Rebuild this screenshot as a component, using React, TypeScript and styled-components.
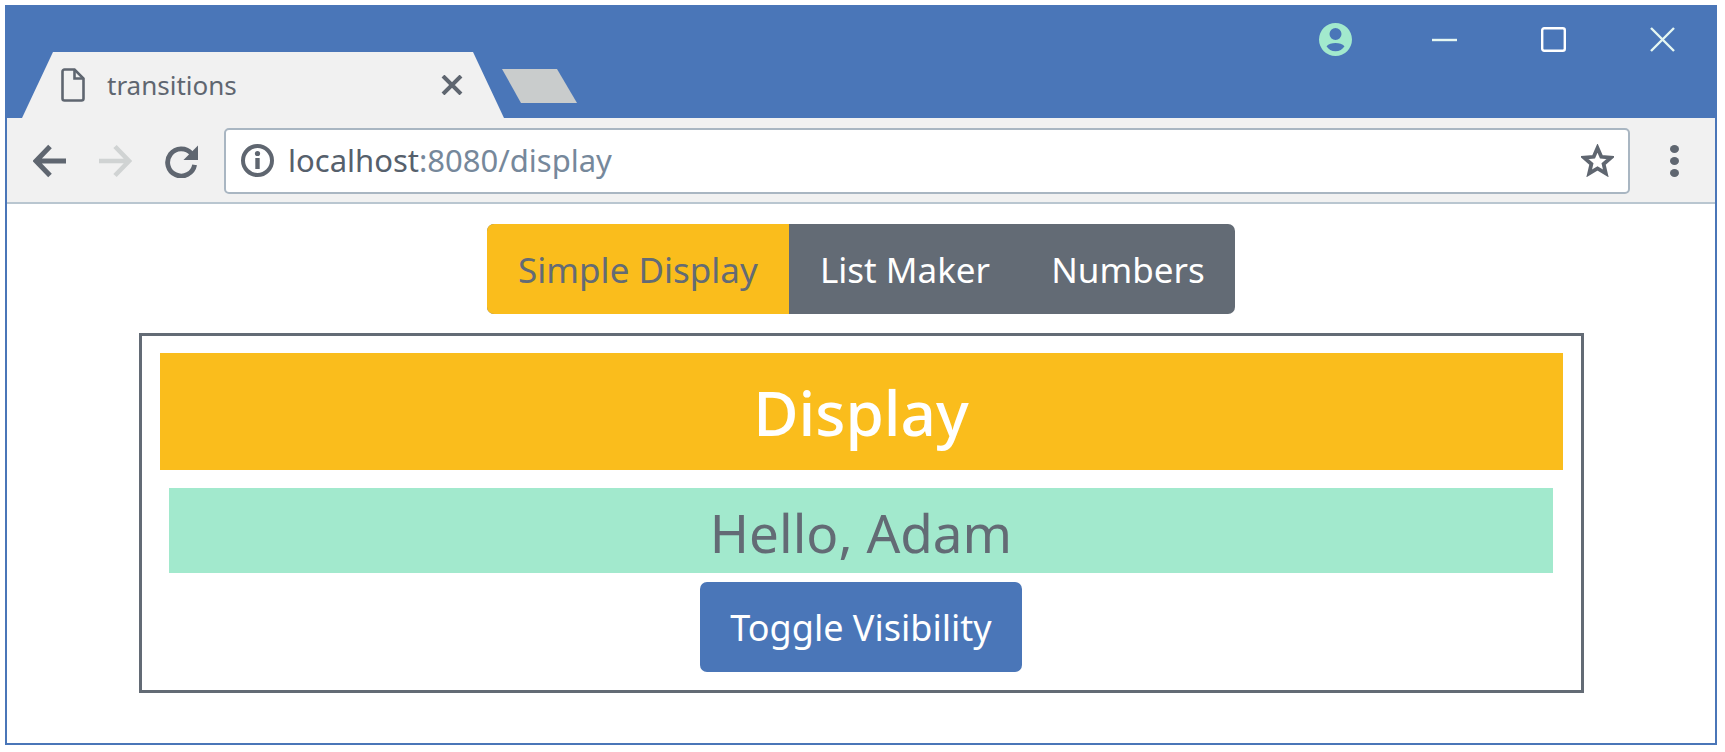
import React from 'react'
import styled, { createGlobalStyle } from 'styled-components'

const GlobalStyle = createGlobalStyle`
  html, body {
    margin: 0;
    padding: 0;
    background: #fff;
  }
  body {
    font-family: 'Noto Sans', 'Open Sans', sans-serif;
  }
`

const Page = styled.div`
  width: 1725px;
  height: 752px;
  padding: 5px 8px 7px 5px;
  box-sizing: border-box;
  overflow: hidden;
`

const Window = styled.div`
  height: 100%;
  box-sizing: border-box;
  border: 2px solid #4a76b8;
  border-top: none;
  display: flex;
  flex-direction: column;
`

const TitleBar = styled.div`
  height: 113px;
  flex: none;
  background: #4a76b8;
  display: flex;
  align-items: flex-end;
  padding-left: 15px;
`

const Tab = styled.div`
  width: 482px;
  height: 66px;
  box-sizing: border-box;
  background: #f1f1f1;
  clip-path: polygon(0 100%, 31px 0, 451px 0, 100% 100%);
  display: flex;
  align-items: center;
  padding: 0 41px 0 39px;
  color: #5f6670;
`

const TabTitle = styled.span`
  font-size: 26px;
  line-height: 32px;
  margin-left: 22px;
  flex: 1;
`

const NewTab = styled.div`
  width: 75px;
  height: 34px;
  margin: 0 0 15px -2px;
  background: #c9cccc;
  clip-path: polygon(0 0, 55px 0, 100% 100%, 19px 100%);
`

const WindowControls = styled.div`
  margin-left: auto;
  align-self: flex-start;
  display: flex;
  align-items: center;
  gap: 80px;
  padding: 18px 40px 0 0;
`

const ControlGroup = styled.div`
  display: flex;
  gap: 84px;
`

const ProfileSlot = styled.div`
  width: 33px;
  height: 33px;
`

const ControlSlot = styled.div`
  width: 25px;
  height: 25px;
`

const Toolbar = styled.div`
  height: 86px;
  flex: none;
  box-sizing: border-box;
  background: #f1f1f1;
  border-bottom: 2px solid #b9c6d0;
  display: flex;
  align-items: center;
  padding: 1px 26px 0 26px;
`

const NavButton = styled.div`
  width: 33px;
  height: 34px;
  margin-right: 33px;
  flex: none;
`

const AddressBar = styled.div`
  flex: none;
  width: 1406px;
  height: 66px;
  margin-left: -7px;
  box-sizing: border-box;
  background: #fff;
  border: 2px solid #a9b6c2;
  border-radius: 5px;
  display: flex;
  align-items: center;
  padding: 0 14px 0 15px;
`

const InfoSlot = styled.div`
  width: 33px;
  height: 33px;
  flex: none;
`

const Url = styled.div`
  margin-left: 14px;
  padding-bottom: 2px;
  flex: 1;
  font-size: 31px;
  color: #56606c;
`

const UrlRest = styled.span`
  color: #76889b;
`

const StarSlot = styled.div`
  width: 33px;
  height: 33px;
  flex: none;
`

const MenuDots = styled.div`
  margin-left: 40px;
  display: flex;
  flex-direction: column;
  gap: 4px;
`

const Dot = styled.span`
  width: 9px;
  height: 8px;
  border-radius: 50%;
  background: #5f6670;
`

const Content = styled.div`
  flex: 1;
  display: flex;
  flex-direction: column;
  align-items: center;
  padding-top: 20px;
`

const NavGroup = styled.div`
  width: 748px;
  height: 90px;
  display: flex;
  border-radius: 7px;
  overflow: hidden;
  background: #636b75;
`

const NavItem = styled.div<{ $active?: boolean; $width: number }>`
  width: ${({ $width }) => $width}px;
  flex: none;
  display: flex;
  align-items: center;
  justify-content: center;
  font-size: 35px;
  color: ${({ $active }) => ($active ? '#636b75' : '#fff')};
  background: ${({ $active }) => ($active ? '#fabd1c' : 'transparent')};
`

const Box = styled.div`
  width: 1445px;
  height: 360px;
  margin-top: 19px;
  box-sizing: border-box;
  border: 3px solid #636b75;
  padding: 17px 18px;
  display: flex;
  flex-direction: column;
  align-items: center;
`

const Heading = styled.div`
  width: 100%;
  height: 117px;
  flex: none;
  background: #fabd1c;
  color: #fff;
  font-size: 62px;
  font-weight: 500;
  display: flex;
  align-items: center;
  justify-content: center;
`

const Message = styled.div`
  width: 1384px;
  height: 85px;
  flex: none;
  box-sizing: border-box;
  padding-top: 4px;
  margin-top: 18px;
  background: #a2e9cd;
  color: #636b75;
  font-size: 53px;
  display: flex;
  align-items: center;
  justify-content: center;
`

const ToggleButton = styled.button`
  width: 322px;
  height: 90px;
  flex: none;
  margin-top: 9px;
  border: none;
  border-radius: 7px;
  background: #4a76b8;
  color: #fff;
  font-family: inherit;
  font-size: 36px;
  padding: 0;
`

const Icon = styled.svg`
  display: block;
  width: 100%;
  height: 100%;
`

const FileGlyph = styled.svg`
  width: 24px;
  height: 34px;
  flex: none;
`

const CloseGlyph = styled.svg`
  width: 22px;
  height: 20px;
  flex: none;
`

export default function App() {
  return (
    <>
      <GlobalStyle />
      <Page>
        <Window>
          <TitleBar>
            <Tab>
              <FileGlyph viewBox="0 0 24 34" fill="none" stroke="#5f6670" strokeWidth="2.6">
                <path d="M1.5 3.5a2 2 0 0 1 2-2h10l9 9v20a2 2 0 0 1-2 2h-17a2 2 0 0 1-2-2z" />
                <path d="M13.5 1.5v9h9" />
              </FileGlyph>
              <TabTitle>transitions</TabTitle>
              <CloseGlyph viewBox="0 0 22 20" stroke="#5f6670" strokeWidth="4">
                <path d="M2 1l18 18M20 1L2 19" />
              </CloseGlyph>
            </Tab>
            <NewTab />
            <WindowControls>
              <ProfileSlot>
                <Icon viewBox="0 0 33 33" fill="#a2e9cd">
                  <path
                    fillRule="evenodd"
                    d="M16.5 0a16.5 16.5 0 1 0 0 33a16.5 16.5 0 0 0 0-33zM16.5 5a6 6 0 1 1 0 12a6 6 0 0 1 0-12zM16.5 20c3.6 0 7 1.2 9 3.2c-1.8 3-5.2 5-9 5s-7.2-2-9-5c2-2 5.4-3.2 9-3.2z"
                  />
                </Icon>
              </ProfileSlot>
              <ControlGroup>
                <ControlSlot>
                  <Icon viewBox="0 0 25 25" stroke="#e6f7f2" strokeWidth="2.4">
                    <path d="M0 13h25" />
                  </Icon>
                </ControlSlot>
                <ControlSlot>
                  <Icon viewBox="0 0 25 25" fill="none" stroke="#fff" strokeWidth="2.4">
                    <rect x="1.2" y="1.2" width="22.6" height="22.6" rx="2" />
                  </Icon>
                </ControlSlot>
                <ControlSlot>
                  <Icon viewBox="0 0 25 25" stroke="#e6f7f2" strokeWidth="2.4">
                    <path d="M1 1l23 23M24 1L1 24" />
                  </Icon>
                </ControlSlot>
              </ControlGroup>
            </WindowControls>
          </TitleBar>
          <Toolbar>
            <NavButton>
              <Icon viewBox="0 0 33 34" fill="none" stroke="#5f6670" strokeWidth="5">
                <path d="M33 17H5M17 2.5L3 17L17 31.5" />
              </Icon>
            </NavButton>
            <NavButton>
              <Icon viewBox="0 0 33 34" fill="none" stroke="#d0d3d3" strokeWidth="4.6">
                <path d="M0 17h28M16 2.5l14 14.5L16 31.5" />
              </Icon>
            </NavButton>
            <NavButton>
              <Icon viewBox="0 0 34 34" fill="none">
                <path d="M27.5 9.5A14 14 0 1 0 30.5 21" stroke="#5f6670" strokeWidth="5" />
                <path d="M34 1v15H19z" fill="#5f6670" />
              </Icon>
            </NavButton>
            <AddressBar>
              <InfoSlot>
                <Icon viewBox="0 0 33 33" fill="none">
                  <circle cx="16.5" cy="16.5" r="14.5" stroke="#5f6670" strokeWidth="4" />
                  <path d="M16.5 14v11" stroke="#5f6670" strokeWidth="4.4" />
                  <circle cx="16.5" cy="9.5" r="2.6" fill="#5f6670" />
                </Icon>
              </InfoSlot>
              <Url>
                localhost<UrlRest>:8080/display</UrlRest>
              </Url>
              <StarSlot>
                <Icon viewBox="0 0 33 33" fill="none" stroke="#5f6670" strokeWidth="3.8">
                  <path d="M16.5 4l3.8 8.8l9.6.9l-7.3 6.3l2.2 9.4l-8.3-5l-8.3 5l2.2-9.4l-7.3-6.3l9.6-.9z" />
                </Icon>
              </StarSlot>
            </AddressBar>
            <MenuDots>
              <Dot />
              <Dot />
              <Dot />
            </MenuDots>
          </Toolbar>
          <Content>
            <NavGroup>
              <NavItem $active $width={302}>Simple Display</NavItem>
              <NavItem $width={232}>List Maker</NavItem>
              <NavItem $width={214}>Numbers</NavItem>
            </NavGroup>
            <Box>
              <Heading>Display</Heading>
              <Message>Hello, Adam</Message>
              <ToggleButton>Toggle Visibility</ToggleButton>
            </Box>
          </Content>
        </Window>
      </Page>
    </>
  )
}
